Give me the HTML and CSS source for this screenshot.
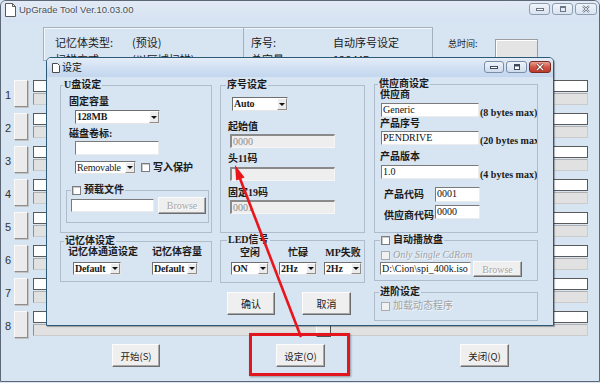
FILE: index.html
```html
<!DOCTYPE html>
<html>
<head>
<meta charset="utf-8">
<link rel="stylesheet" href="styles.css">
</head>
<body>
<div class="win">
  <div class="titlebar">
    <svg class="doc" width="11" height="14" viewBox="0 0 11 14"><path d="M0.5 0.5h7l3 3v10h-10z" fill="#fff" stroke="#5a5a5a"/><path d="M7.5 0.5v3h3" fill="none" stroke="#5a5a5a"/></svg>
    <span class="title">UpGrade Tool Ver.10.03.00</span>
    <div class="ctrls">
      <span class="cb"><svg width="10" height="6" viewBox="0 0 10 6"><rect x="1.5" y="2.5" width="7" height="2" fill="#fff" stroke="#6b7686"/></svg></span>
      <span class="cb"><svg width="10" height="8" viewBox="0 0 10 8"><rect x="2.5" y="1.5" width="5" height="5" fill="none" stroke="#6b7686"/><rect x="3" y="2" width="4" height="1" fill="#6b7686"/></svg></span>
      <span class="cb wide"><svg width="10" height="8" viewBox="0 0 10 8"><path d="M2 1l6 6M8 1l-6 6" stroke="#6b7686" stroke-width="2"/><path d="M2 1l6 6M8 1l-6 6" stroke="#f4f7fb" stroke-width="0.8"/></svg></span>
    </div>
  </div>

  <div class="header">
    <div class="panel">
      <div class="cell left">
        <div class="kv"><span class="k">记忆体类型:</span><span>(预设)</span></div>
        <div class="kv second"><span class="k">扫描方式:</span><span>(以区域扫描)</span></div>
      </div>
      <div class="cell right">
        <div class="kv"><span class="k">序号:</span><span>自动序号设定</span></div>
        <div class="kv second"><span class="k">总容量:</span><span>128 MB</span></div>
      </div>
    </div>
    <div class="total"><span class="tl">总时间:</span><span class="timebox"></span></div>
  </div>

  <div class="rows">
    <div class="row"><span class="num">1</span><span class="rbtn"></span><div class="bars"><div class="wbox"></div><div class="gbar"></div></div></div>
    <div class="row"><span class="num">2</span><span class="rbtn"></span><div class="bars"><div class="wbox"></div><div class="gbar"></div></div></div>
    <div class="row"><span class="num">3</span><span class="rbtn"></span><div class="bars"><div class="wbox"></div><div class="gbar"></div></div></div>
    <div class="row"><span class="num">4</span><span class="rbtn"></span><div class="bars"><div class="wbox"></div><div class="gbar"></div></div></div>
    <div class="row"><span class="num">5</span><span class="rbtn"></span><div class="bars"><div class="wbox"></div><div class="gbar"></div></div></div>
    <div class="row"><span class="num">6</span><span class="rbtn"></span><div class="bars"><div class="wbox"></div><div class="gbar"></div></div></div>
    <div class="row"><span class="num">7</span><span class="rbtn"></span><div class="bars"><div class="wbox"></div><div class="gbar"></div></div></div>
    <div class="row"><span class="num">8</span><span class="rbtn"></span><div class="bars"><div class="wbox"></div><div class="gbar"></div><span class="mini"></span></div></div>
  </div>

  <div class="actions">
    <span class="btn b1">开始(S)</span>
    <span class="btn b2">设定(O)</span>
    <span class="btn b3">关闭(Q)</span>
  </div>

  <div class="dialog">
    <div class="dtitle">
      <svg class="ddoc" width="8" height="10" viewBox="0 0 8 10"><path d="M0.5 0.5h5l2 2v7h-7z" fill="#fff" stroke="#4a4a4a"/></svg>
      <span class="dt">设定</span>
      <div class="dctrls">
        <span class="dcb w20"><svg width="10" height="6" viewBox="0 0 10 6"><rect x="1.5" y="2.5" width="7" height="2" fill="#fff" stroke="#3d4b5e"/></svg></span>
        <span class="dcb w21"><svg width="10" height="8" viewBox="0 0 10 8"><rect x="2.5" y="1.5" width="5" height="5" fill="#fff" stroke="#3d4b5e"/><rect x="3" y="2" width="4" height="1.5" fill="#3d4b5e"/></svg></span>
        <span class="dcb close"><svg width="10" height="8" viewBox="0 0 10 8"><path d="M2 1l6 6M8 1l-6 6" stroke="#6b2019" stroke-width="2.6"/><path d="M2 1l6 6M8 1l-6 6" stroke="#fff" stroke-width="1.3"/></svg></span>
      </div>
    </div>

    <div class="dbody">
      <div class="col c1">
        <fieldset class="g g-u">
          <legend class="lg1">U盘设定</legend>
          <div class="in-u">
            <div class="lbl">固定容量</div>
            <div class="sel s128 h14"><span class="sv">128MB</span><span class="dd"><i></i></span></div>
            <div class="lbl mt4">磁盘卷标:</div>
            <div class="inp vol"></div>
            <div class="hrow rm">
              <div class="sel srem"><span class="sv">Removable</span><span class="dd"><i></i></span></div>
              <span class="chk wp"></span><span class="clbl">写入保护</span>
            </div>
            <fieldset class="g g-pre">
              <legend class="lgc lg-pre"><span class="chk"></span><span class="clbl">预载文件</span></legend>
              <div class="hrow pre">
                <div class="inp prei"></div>
                <span class="dbtn dis browse1">Browse</span>
              </div>
            </fieldset>
          </div>
        </fieldset>
        <fieldset class="g g-mem">
          <legend class="lg-mem">记忆体设定</legend>
          <div class="in-mem">
            <div class="mcol">
              <div class="lbl">记忆体通道设定</div>
              <div class="sel sdef1"><span class="sv">Default</span><span class="dd"><i></i></span></div>
            </div>
            <div class="mcol">
              <div class="lbl">记忆体容量</div>
              <div class="sel sdef2"><span class="sv">Default</span><span class="dd"><i></i></span></div>
            </div>
          </div>
        </fieldset>
      </div>

      <div class="col c2">
        <fieldset class="g g-sn">
          <legend class="lg-sn">序号设定</legend>
          <div class="in-sn">
            <div class="sel sauto h14"><span class="sv">Auto</span><span class="dd"><i></i></span></div>
            <div class="lbl mt10">起始值</div>
            <div class="inp dis sni mt1">0000</div>
            <div class="lbl mt5">头11码</div>
            <div class="inp dis sni mt2"></div>
            <div class="lbl mt6">固定19码</div>
            <div class="inp dis sni mt1">0001</div>
          </div>
        </fieldset>
        <fieldset class="g g-led">
          <legend class="lg-led">LED信号</legend>
          <div class="in-led">
            <div class="lcol l1"><div class="lbl">空闲</div><div class="sel sled"><span class="sv">ON</span><span class="dd"><i></i></span></div></div>
            <div class="lcol l2"><div class="lbl">忙碌</div><div class="sel sled"><span class="sv">2Hz</span><span class="dd"><i></i></span></div></div>
            <div class="lcol l3"><div class="lbl">MP失败</div><div class="sel sled"><span class="sv">2Hz</span><span class="dd"><i></i></span></div></div>
          </div>
        </fieldset>
        <div class="okrow">
          <span class="dbtn ok">确认</span>
          <span class="dbtn cancel">取消</span>
        </div>
      </div>

      <div class="col c3">
        <fieldset class="g g-ven">
          <legend class="lg-ven">供应商设定</legend>
          <div class="in-ven">
            <div class="lbl first">供应商</div>
            <div class="hrow vrow mt2"><div class="inp vi">Generic</div><span class="note">(8 bytes max)</span></div>
            <div class="lbl mt1">产品序号</div>
            <div class="hrow vrow mt1"><div class="inp vi">PENDRIVE</div><span class="note">(20 bytes max</span></div>
            <div class="lbl mt6">产品版本</div>
            <div class="hrow vrow mt2"><div class="inp vi">1.0</div><span class="note">(4 bytes max)</span></div>
            <div class="hrow code mt8"><span class="lbl cl">产品代码</span><div class="inp ci h15">0001</div></div>
            <div class="hrow code mt3"><span class="lbl cl low">供应商代码</span><div class="inp ci">0000</div></div>
          </div>
        </fieldset>
        <fieldset class="g g-auto">
          <legend class="lgc lg-auto"><span class="chk"></span><span class="clbl">自动播放盘</span></legend>
          <div class="in-auto">
            <div class="hrow only"><span class="chk dis"></span><span class="clbl distext">Only Single CdRom</span></div>
            <div class="hrow iso"><div class="inp isoi">D:\Cion\spi_400k.iso</div><span class="dbtn dis browse2">Browse</span></div>
          </div>
        </fieldset>
        <fieldset class="g g-adv">
          <legend class="lg-adv">进阶设定</legend>
          <div class="in-adv">
            <div class="hrow"><span class="chk dis"></span><span class="clbl distext">加载动态程序</span></div>
          </div>
        </fieldset>
      </div>
    </div>
  </div>
</div>

<div class="callout"></div>
<svg class="anno" width="600" height="383" viewBox="0 0 600 383">
  <line x1="301" y1="337" x2="239.6" y2="177.5" stroke="#e8151b" stroke-width="2.6"/>
  <polygon points="235,165 244.6,177.4 236.2,180.6" fill="#e8151b"/>
</svg>
</body>
</html>
```

FILE: styles.css
```css
* { box-sizing: border-box; }
html, body { margin: 0; padding: 0; }
body {
  position: relative;
  width: 600px;
  height: 383px;
  overflow: hidden;
  background: #d8e4f2;
  font-family: "Noto Sans CJK SC", "Liberation Sans", sans-serif;
  color: #1b1b1b;
}

/* ---------- main window ---------- */
.win {
  position: relative;
  width: 600px;
  height: 382px;
  border: 1px solid #5c6876;
  border-radius: 6px 6px 0 0;
  background: #d7e4f2;
  overflow: hidden;
}
.titlebar {
  height: 21px;
  display: flex;
  align-items: flex-start;
  padding-left: 4px;
  background: linear-gradient(#e1eaf5, #d5e2f1);
}
.doc { margin-top: 2px; }
.title {
  margin-left: 3px;
  margin-top: 3px;
  font: 9.5px/12px "Liberation Sans", sans-serif;
  color: #4a4f57;
  text-shadow: 0 0 3px #fff;
}
.ctrls {
  margin-left: auto;
  margin-top: 2px;
  margin-right: 2px;
  display: flex;
  gap: 2px;
}
.cb {
  width: 21px;
  height: 12px;
  border: 1px solid #8c9cb1;
  border-radius: 3px;
  background: linear-gradient(#f1f5fa, #d9e3ef);
  display: flex;
  align-items: center;
  justify-content: center;
}
.cb.wide { width: 22px; }

.header {
  display: flex;
  margin-top: 5px;
  height: 46px;
}
.panel {
  margin-left: 42px;
  width: 390px;
  height: 34px;
  border: 1px solid #a3b0bf;
  box-shadow: inset 1px 1px 0 #f3f7fb;
  display: flex;
  overflow: hidden;
}
.cell { font-size: 11px; line-height: 14px; }
.cell.left { width: 200px; border-right: 1px solid #a3b0bf; padding: 7px 0 0 11px; }
.cell.right { flex: 1; padding: 7px 0 0 7px; }
.kv { display: flex; height: 14px; white-space: nowrap; }
.kv.second { margin-top: 3px; }
.left .k { width: 77px; }
.right .k { width: 82px; }
.total {
  margin-left: 15px;
  margin-top: 11px;
  display: flex;
  align-items: flex-start;
  font-size: 9px;
  line-height: 12px;
}
.tl { width: 47px; }
.timebox {
  margin-top: 1px;
  width: 43px;
  height: 24px;
  background: #e4e4e4;
  border: 1px solid #9d9d9d;
  box-shadow: inset 1px 1px 0 #fff;
}

.rows { margin-top: 7px; }
.row {
  display: flex;
  height: 27px;
  margin-bottom: 6px;
  padding-left: 4px;
}
.num {
  width: 9px;
  font: 11px/27px "Liberation Sans", sans-serif;
  color: #333;
  padding-top: 2px;
}
.rbtn {
  width: 14px;
  height: 27px;
  background: #ebebeb;
  border: 1px solid;
  border-color: #fafafa #8e8e8e #8e8e8e #fafafa;
  box-shadow: 1px 1px 0 #c2c2c2;
}
.bars { position: relative; margin-left: 5px; width: 555px; }
.wbox {
  height: 12px;
  background: #fff;
  border: 1px solid #5a5a5a;
}
.gbar {
  height: 12px;
  margin-top: 1px;
  background: #e1e1e1;
  border: 1px solid #cbcbcb;
  border-left-color: #8f8f8f;
  border-top-color: #b0b0b0;
}
.mini {
  position: absolute;
  left: 283px;
  top: 10px;
  width: 15px;
  height: 16px;
  background: #ececec;
  border: 1px solid;
  border-color: #fff #505050 #505050 #fff;
}

.actions { display: flex; margin-top: 2px; }
.btn {
  width: 48px;
  height: 23px;
  display: flex;
  align-items: center;
  justify-content: center;
  font-size: 9.5px;
  color: #1e1e1e;
  background: #efefef;
  border: 1px solid;
  border-color: #fcfcfc #6f6f6f #6f6f6f #fcfcfc;
  box-shadow: inset -1px -1px 0 #a8a8a8;
}
.b1 { margin-left: 111px; }
.b2 { margin-left: 116px; width: 49px; }
.b3 { margin-left: 135px; width: 49px; }

/* ---------- dialog ---------- */
.dialog {
  position: absolute;
  left: 45px;
  top: 56px;
  width: 508px;
  height: 269px;
  border: 1px solid #2c5a76;
  border-radius: 5px 5px 0 0;
  background: #d7e4f2;
  box-shadow: 1px 1px 1px rgba(0, 0, 0, 0.3);
  font: bold 10px "Liberation Serif", "Noto Sans CJK SC", serif;
}
.dtitle {
  height: 19px;
  display: flex;
  align-items: flex-start;
  padding: 0 2px 0 5px;
  border-radius: 4px 4px 0 0;
  background: linear-gradient(#e4edf8 0%, #d3e2f3 45%, #c2d6ee 100%);
}
.ddoc { margin-top: 5px; }
.dt {
  margin-left: 2px;
  margin-top: 3px;
  font: 10px/12px "Noto Sans CJK SC", sans-serif;
  color: #111;
}
.dctrls { margin-left: auto; margin-top: 3px; display: flex; gap: 2px; }
.dcb {
  height: 12px;
  border: 1px solid #7a8ca6;
  border-radius: 3px;
  background: linear-gradient(#eef3fa, #cfdcec);
  display: flex;
  align-items: center;
  justify-content: center;
}
.w20 { width: 20px; }
.w21 { width: 21px; }
.dcb.close {
  width: 22px;
  border-color: #7b2a22;
  background: linear-gradient(#e6a193, #cf5748 50%, #bd3b2e);
}

.dbody { display: flex; padding: 2px 0 0 13px; }
.col { display: flex; flex-direction: column; }
.c1 { width: 152px; }
.c2 { width: 145px; margin-left: 8px; }
.c3 { width: 164px; margin-left: 9px; }

.g {
  margin: 0;
  padding: 0;
  min-width: 0;
  border: 1px solid #aebccc;
}
legend {
  padding: 0 1px;
  height: 12px;
  line-height: 12px;
  white-space: nowrap;
}
.lgc { display: flex; align-items: center; }
.lbl { line-height: 12px; height: 12px; white-space: nowrap; }
.clbl { line-height: 12px; white-space: nowrap; margin-left: 3px; }
.mt1 { margin-top: 1px; }
.mt2 { margin-top: 2px; }
.mt3 { margin-top: 3px; }
.mt4 { margin-top: 4px; }
.mt5 { margin-top: 5px; }
.mt6 { margin-top: 6px; }
.mt8 { margin-top: 8px; }
.mt10 { margin-top: 10px; }
.hrow { display: flex; align-items: center; }

/* widgets */
.sel {
  display: flex;
  height: 13px;
  background: #fff;
  border: 1px solid;
  border-color: #6f6f6f #e6e6e6 #e6e6e6 #6f6f6f;
}
.sel.h14 { height: 14px; }
.sv { flex: 1; padding-left: 1px; line-height: 11px; overflow: hidden; white-space: nowrap; letter-spacing: -0.2px; }
.dd {
  width: 10px;
  flex: none;
  background: #ececec;
  border: 1px solid;
  border-color: #fff #8d8d8d #8d8d8d #fff;
  display: flex;
  align-items: center;
  justify-content: center;
}
.dd i {
  width: 0;
  height: 0;
  border-left: 3px solid transparent;
  border-right: 3px solid transparent;
  border-top: 3px solid #111;
}
.inp {
  height: 14px;
  background: #fff;
  border: 1px solid;
  border-color: #7a7a7a #ececec #ececec #7a7a7a;
  font: 10px/12px "Liberation Serif", serif;
  padding-left: 1px;
  white-space: nowrap;
  overflow: hidden;
  color: #111;
}
.inp.dis {
  background: #eeeeee;
  border-width: 2px 1px 1px 2px;
  border-color: #8a8a8a #f6f6f6 #f6f6f6 #8a8a8a;
  color: #8c8c8c;
  line-height: 11px;
}
.inp.h15 { height: 15px; }
.chk {
  width: 9px;
  height: 9px;
  flex: none;
  background: #fff;
  border: 1px solid #7d7d7d;
  box-shadow: inset 1px 1px 0 #c9c9c9;
}
.chk.dis { background: #f1f1f1; border-color: #ababab; box-shadow: none; }
.distext { color: #a3a3a3; text-shadow: 1px 1px 0 #f4f8fc; font-weight: normal; }
.dbtn {
  display: flex;
  align-items: center;
  justify-content: center;
  background: #efefef;
  border: 1px solid;
  border-color: #fcfcfc #6c6c6c #6c6c6c #fcfcfc;
  box-shadow: inset -1px -1px 0 #a6a6a6;
  font: 10px "Noto Sans CJK SC", sans-serif;
  color: #1a1a1a;
}
.dbtn.dis {
  font: 10px "Liberation Serif", serif;
  color: #a6a6a6;
  text-shadow: 1px 1px 0 #fff;
}

/* column 1 */
.g-u { height: 154px; }
.lg1 { margin-left: 2px; }
.in-u { padding: 5px 0 0 8px; }
.s128 { width: 85px; margin-left: 6px; margin-top: 2px; }
.vol { width: 84px; margin-left: 6px; margin-top: 1px; }
.rm { margin-top: 6px; margin-left: 6px; height: 13px; }
.srem { width: 61px; }
.srem .sv { font-weight: normal; }
.wp { margin-left: 5px; }
.g-pre { margin-left: -3px; margin-top: 10px; width: 143px; height: 39px; }
.lg-pre { margin-left: 4px; }
.pre { padding: 1px 0 0 4px; height: 18px; }
.prei { width: 83px; height: 13px; }
.browse1 { width: 48px; height: 17px; margin-left: 4px; }
.g-mem { margin-top: 2px; height: 47px; }
.lg-mem { margin-left: 3px; }
.in-mem { display: flex; padding-left: 7px; margin-top: -1px; }
.mcol { display: flex; flex-direction: column; }
.mcol:first-child { width: 84px; }
.sdef1 { width: 48px; margin-left: 5px; margin-top: 4px; }
.sdef2 { width: 46px; margin-top: 4px; }

/* column 2 */
.g-sn { height: 154px; }
.lg-sn { margin-left: 5px; }
.in-sn { padding: 6px 0 0 7px; }
.sauto { width: 56px; margin-left: 4px; }
.sni { width: 105px; margin-left: 2px; }
.g-led { margin-top: 1px; height: 49px; }
.lg-led { margin-left: 6px; }
.in-led { display: flex; padding: 1px 0 0 10px; }
.lcol { width: 38px; display: flex; flex-direction: column; align-items: center; }
.l2 { margin-left: 10px; }
.l3 { margin-left: 7px; }
.sled { width: 38px; margin-top: 3px; }
.okrow { display: flex; margin-top: 9px; padding-left: 7px; }
.ok, .cancel { width: 48px; height: 23px; }
.cancel { margin-left: 27px; width: 49px; }

/* column 3 */
.g-ven { margin-top: -1px; height: 155px; }
.lg-ven { margin-left: 3px; }
.in-ven { padding: 0 0 0 5px; }
.lbl.first { margin-top: -1px; }
.vrow { align-items: flex-end; }
.vi { width: 98px; margin-left: 1px; }
.note { margin-left: 1px; line-height: 12px; margin-bottom: -2px; white-space: nowrap; overflow: hidden; width: 57px; }
.code { padding-left: 4px; }
.cl { width: 51px; }
.cl.low { align-self: flex-end; margin-bottom: -3px; }
.ci { width: 45px; }
.g-auto { margin-top: 1px; height: 47px; }
.lg-auto { margin-left: 5px; }
.in-auto { padding-left: 5px; }
.only { margin-top: 3px; margin-left: 1px; width: 91px; overflow: hidden; }
.only .clbl { font-style: italic; }
.iso { align-items: flex-start; }
.isoi { width: 91px; margin-top: 1px; height: 13px; line-height: 11px; }
.browse2 { width: 49px; height: 16px; margin-left: 2px; }
.g-adv { margin-top: 5px; height: 35px; }
.lg-adv { margin-left: 4px; }
.in-adv { padding: 2px 0 0 6px; }

/* ---------- annotation ---------- */
.callout {
  position: absolute;
  left: 249px;
  top: 333px;
  width: 101px;
  height: 43px;
  border: 3px solid #e3161d;
  box-shadow: 1px 1px 2px rgba(0, 0, 0, 0.35);
}
.anno { position: absolute; left: 0; top: 0; pointer-events: none; }
```
